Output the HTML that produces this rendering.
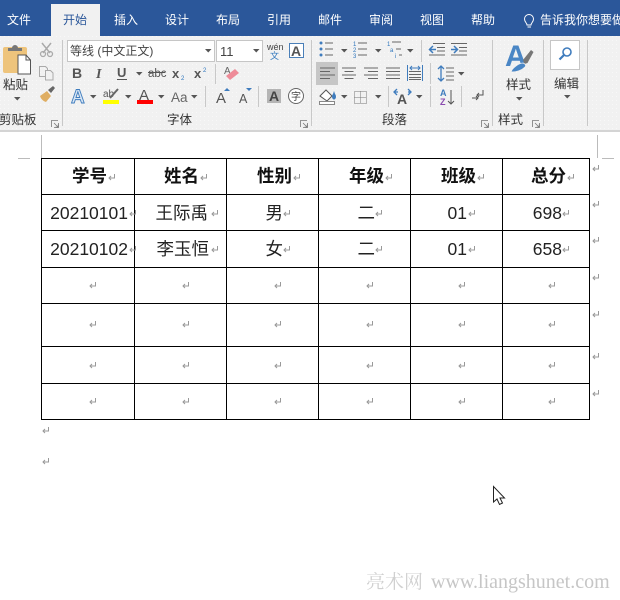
<!DOCTYPE html>
<html lang="zh"><head><meta charset="utf-8"><title>Word</title>
<style>
html,body{margin:0;padding:0;background:#fff}
svg{display:block}
text{font-family:"Liberation Sans","Noto Sans CJK SC",sans-serif}
.t{font-size:12px;fill:#fff}
.r{font-size:12.500px;fill:#333}
.h{font-size:17.500px;font-weight:700;fill:#111;text-anchor:end}
.c{font-size:17.500px;fill:#222;text-anchor:end}
.g{fill:none;stroke:#666;stroke-width:1}
</style></head><body>
<svg width="620" height="600" viewBox="0 0 620 600" xmlns="http://www.w3.org/2000/svg">
<defs>
<path id="dn" d="M0 0h6.500l-3.250 3.500z" fill="#555"/>
<path id="ret" d="M6.500 0v4H1M3 2L1 4l2 2" fill="none" stroke="#999" stroke-width="1"/>
<path id="lnch" d="M.5 7V.5H7M7.500 3v4.500H3M3 3l4 4M4.500 7.200h2.700V4.500" fill="none" stroke="#777" stroke-width=".8"/>
<pattern id="dots" width="4" height="4" patternUnits="userSpaceOnUse"><rect width="1" height="1" fill="#f8f8f8"/></pattern>
</defs>
<rect width="620" height="600" fill="#fff"/>
<rect width="620" height="36" fill="#2b579a"/>
<rect y="36" width="620" height="94" fill="#f1f1f1"/>
<rect y="36" width="620" height="94" fill="url(#dots)"/>
<rect y="130" width="620" height="2" fill="#d4d4d4"/>
<rect x="51" y="4" width="49" height="32" fill="#f1f1f1"/>
<text class="t" x="7" y="24">文件</text>
<text class="t" x="63" y="24" style="fill:#2b579a">开始</text>
<text class="t" x="114" y="24">插入</text>
<text class="t" x="165" y="24">设计</text>
<text class="t" x="216" y="24">布局</text>
<text class="t" x="267" y="24">引用</text>
<text class="t" x="318" y="24">邮件</text>
<text class="t" x="369" y="24">审阅</text>
<text class="t" x="420" y="24">视图</text>
<text class="t" x="471" y="24">帮助</text>
<path d="M527.500 27h3.500M527 25c0-2-2.500-3-2.500-6a4.500 4.500 0 0 1 9 0c0 3-2.500 4-2.500 6z" fill="none" stroke="#fff" stroke-width="1"/>
<text class="t" x="540" y="24">告诉我你想要做</text>

<g fill="#c8c8c8">
<rect x="62" y="40" width="1" height="86"/><rect x="311" y="40" width="1" height="86"/>
<rect x="492" y="40" width="1" height="86"/><rect x="543" y="40" width="1" height="86"/><rect x="587" y="40" width="1" height="86"/>
<rect x="215" y="64" width="1" height="20"/><rect x="205" y="86" width="1" height="21"/><rect x="258" y="86" width="1" height="21"/>
<rect x="421" y="40" width="1" height="22"/><rect x="430" y="63" width="1" height="21"/><rect x="388" y="86" width="1" height="21"/><rect x="430" y="86" width="1" height="21"/><rect x="461" y="86" width="1" height="21"/>
</g>

<!-- clipboard -->
<rect x="3" y="47" width="24" height="26" rx="2" fill="#eec47c"/>
<path d="M8 51v-3h4a3 3 0 0 1 6 0h4v3z" fill="#777"/>
<path d="M18 55h8l4.500 5v14H18z" fill="#fff" stroke="#555"/>
<path d="M26 55v5h4.500" fill="none" stroke="#555"/>
<text class="r" x="3" y="89">粘贴</text>
<use href="#dn" x="14" y="97"/>
<path d="M42 43l8 10M51 43l-8 10" stroke="#aaa" stroke-width="1.500" fill="none"/>
<circle cx="43" cy="54" r="2.500" fill="none" stroke="#aaa" stroke-width="1.300"/><circle cx="50" cy="54" r="2.500" fill="none" stroke="#aaa" stroke-width="1.300"/>
<path d="M39.500 66.500h6l2 2v8h-8z" fill="none" stroke="#aaa"/><path d="M45.500 70.500h5l2.500 2.500v7h-7.500z" fill="#f1f1f1" stroke="#aaa"/>
<path d="M40 96l7-5 4 5-5 6c-3-1-5-3-6-6z" fill="#dfae63"/><path d="M48 90l5-4 2 2-4 5z" fill="#666"/>
<text class="r" x="-1" y="124">剪贴板</text>
<use href="#lnch" x="51" y="120"/>

<!-- font -->
<rect x="67.500" y="40.500" width="147" height="21" fill="#fff" stroke="#c6c6c6"/>
<rect x="216.500" y="40.500" width="46" height="21" fill="#fff" stroke="#c6c6c6"/>
<text x="70" y="55" style="font-size:12px;fill:#444">等线 (中文正文)</text>
<text x="220" y="56" style="font-size:13px;fill:#444">11</text>
<use href="#dn" x="205" y="49"/><use href="#dn" x="253" y="49"/>
<text x="267" y="50" style="font-size:9px;fill:#444">wén</text>
<text x="270" y="59" style="font-size:9px;fill:#2f76bd">文</text>
<rect x="289.500" y="43.500" width="14" height="14" fill="#fff" stroke="#4a7fb8"/>
<text x="291" y="56" style="font-size:14px;font-weight:700;fill:#555">A</text>
<text x="72" y="78" style="font-size:14px;font-weight:700;fill:#555">B</text>
<text x="96" y="78" style="font-size:14px;font-weight:700;font-style:italic;fill:#555;font-family:'Liberation Serif',serif">I</text>
<text x="117" y="77" style="font-size:13px;font-weight:700;fill:#555">U</text><rect x="117" y="79" width="10" height="1" fill="#555"/>
<use href="#dn" x="136" y="72"/>
<text x="148" y="77" style="font-size:11.500px;fill:#555">abc</text><rect x="148" y="72" width="17" height="1" fill="#555"/>
<text x="172" y="78" style="font-size:13px;font-weight:700;fill:#555">x</text><text x="181" y="80" style="font-size:6px;fill:#2f76bd">2</text>
<text x="194" y="78" style="font-size:13px;font-weight:700;fill:#555">x</text><text x="203" y="72" style="font-size:6px;fill:#2f76bd">2</text>
<text x="224" y="74" style="font-size:10px;fill:#666">A</text>
<path d="M226 76l9-7 4 4-9 7z" fill="#ee8b98"/>
<text x="71" y="103" style="font-size:19px;font-weight:700;fill:#d8e6f5;stroke:#3f7cbd;stroke-width:.9">A</text>
<use href="#dn" x="90" y="95"/>
<text x="103" y="97" style="font-size:10px;fill:#555">ab</text>
<path d="M110 98l8-9" stroke="#666" stroke-width="2"/>
<rect x="103" y="100" width="16" height="4" fill="#ff0"/>
<use href="#dn" x="125" y="95"/>
<text x="139" y="100" style="font-size:15px;fill:#555">A</text>
<rect x="137" y="100" width="16" height="4" fill="#f00"/>
<use href="#dn" x="158" y="95"/>
<text x="171" y="102" style="font-size:13.500px;fill:#666">Aa</text>
<use href="#dn" x="191" y="95"/>
<text x="216" y="103" style="font-size:15px;fill:#555">A</text><path d="M224 91h6l-3-3z" fill="#3f7cbd"/>
<text x="239" y="103" style="font-size:12.500px;fill:#555">A</text><path d="M246 88h6l-3 3z" fill="#3f7cbd"/>
<rect x="267" y="89" width="14" height="14" fill="#b5b5b5"/>
<text x="269" y="101" style="font-size:14px;font-weight:700;fill:#444">A</text>
<circle cx="296" cy="96" r="7.500" fill="#fff" stroke="#666"/>
<text x="291" y="100" style="font-size:10px;fill:#444">字</text>
<text class="r" x="167" y="124">字体</text>
<use href="#lnch" x="300" y="120"/>

<!-- paragraph -->
<rect x="316" y="62" width="22" height="23" fill="#c6c6c6"/>
<g fill="#3f7cbd"><circle cx="321" cy="43" r="1.500"/><circle cx="321" cy="49" r="1.500"/><circle cx="321" cy="55" r="1.500"/></g>
<path class="g" d="M325 43h8M325 49h8M325 55h8M358 43h9M358 49h9M358 55h9M392 42h9M396 49h5M399 55h3M433 43.500h12M437 47.500h8M437 51h8M429 55h16M451 43.500h16M459 47.500h8M459 51h8M451 55h16"/>
<use href="#dn" x="341" y="49"/><use href="#dn" x="375" y="49"/><use href="#dn" x="407" y="49"/>
<text x="353" y="46" style="font-size:6px;fill:#2f76bd">1</text><text x="353" y="52" style="font-size:6px;fill:#2f76bd">2</text><text x="353" y="58" style="font-size:6px;fill:#2f76bd">3</text>
<text x="387" y="46" style="font-size:6px;fill:#2f76bd">1</text><text x="390" y="52" style="font-size:6px;fill:#2f76bd">a</text><text x="395" y="58" style="font-size:6px;fill:#2f76bd">i</text>
<path d="M436 49.500h-6M433 46l-3.500 3.500 3.500 3.500M451 49.500h6M454 46l3.500 3.500-3.500 3.500" fill="none" stroke="#3f7cbd" stroke-width="1.500"/>
<path class="g" d="M320 68h15M320 71.500h10M320 75h15M320 78.500h10M342 68h14M344.500 71.500h9M342 75h14M344.500 78.500h9M364 68h14M368 71.500h10M364 75h14M368 78.500h10M386 68h14M386 71.500h14M386 75h14M386 78.500h14M409 71.500h12M409 74.500h12M409 77.500h12"/>
<path d="M407.500 65v16M422.500 65v16M410 68h10M412 66l-2 2 2 2M418 66l2 2-2 2" fill="none" stroke="#3f7cbd"/>
<rect x="409" y="79" width="12" height="1" fill="#666"/>
<path d="M441 66v15M438 69l3-3 3 3M438 78l3 3 3-3" fill="none" stroke="#3f7cbd" stroke-width="1.300"/>
<path class="g" d="M446 68h8M446 72h8M446 76h8M446 80h8"/>
<use href="#dn" x="458" y="72"/>
<path d="M320 96l6-6 6 6-5 5z" fill="#fff" stroke="#555"/><path d="M333 94a2 3 0 1 0 2 0l-1-3z" fill="#3f7cbd"/>
<rect x="319.500" y="101.500" width="15" height="3" fill="#fff" stroke="#888"/>
<use href="#dn" x="341" y="95"/>
<path d="M354.500 91.500h12v12h-12zM360.500 91.500v12M354.500 97.500h12" fill="none" stroke="#777" stroke-dasharray="1 1"/>
<use href="#dn" x="375" y="95"/>
<text x="397" y="104" style="font-size:14px;font-weight:700;fill:#555">A</text>
<path d="M398 92h-3M397 89l-3 3 3 3M408 92h3M408 89l3 3-3 3" fill="none" stroke="#3f7cbd" stroke-width="1.300"/>
<use href="#dn" x="416" y="95"/>
<text x="440" y="96" style="font-size:9px;font-weight:700;fill:#3f7cbd">A</text>
<text x="440" y="105" style="font-size:9px;font-weight:700;fill:#8a4bb0">Z</text>
<path d="M451 90v14M448 101l3 3 3-3" fill="none" stroke="#555"/>
<path d="M483 90v5h-6M479 93l-2 2 2 2M472 98h6M476 96l2 2-2 2" fill="none" stroke="#555"/>
<text class="r" x="382" y="124">段落</text>
<use href="#lnch" x="481" y="120"/>

<!-- styles -->
<text x="505" y="66" style="font-size:30px;font-weight:700;fill:#4a86c5">A</text>
<path d="M523 60l8-10 2.500 2-6 11-3 1z" fill="#777"/>
<path d="M511 72c1-4 8-9 12-9 3 1 3 3 2 4-3 3-8 5-14 5z" fill="#4a86c5" stroke="#f1f1f1" stroke-width=".8"/>
<text class="r" x="506" y="89">样式</text>
<use href="#dn" x="516" y="97"/>
<text class="r" x="498" y="124">样式</text>
<use href="#lnch" x="532" y="120"/>

<!-- edit -->
<rect x="550.500" y="40.500" width="29" height="29" fill="#fff" stroke="#c6c6c6"/>
<circle cx="567" cy="52" r="4" fill="none" stroke="#3f7cbd" stroke-width="1.600"/>
<path d="M564 55l-4.500 4.500" stroke="#3f7cbd" stroke-width="2.200"/>
<text class="r" x="554" y="88">编辑</text>
<use href="#dn" x="564" y="95"/>

<!-- page corner marks -->
<path d="M41.500 135v23M18 158.500h12M597.500 135v23M602 158.500h12" stroke="#bbb" fill="none"/>

<!-- table -->
<path d="M41.500 158v261.500M134.500 158v261.500M226.500 158v261.500M318.500 158v261.500M410.500 158v261.500M502.500 158v261.500M589.500 158v261.500M41 158.500h549M41 194.500h549M41 230.500h549M41 267.500h549M41 303.500h549M41 346.500h549M41 383.500h549M41 419.500h549" stroke="#000" fill="none"/>

<text class="h" x="107" y="182">学号</text><text class="h" x="199" y="182">姓名</text><text class="h" x="292" y="182">性别</text><text class="h" x="384" y="182">年级</text><text class="h" x="476" y="182">班级</text><text class="h" x="566" y="182">总分</text>
<text class="c" x="128" y="219">20210101</text><text class="c" x="208" y="219">王际禹</text><text class="c" x="283" y="219">男</text><text class="c" x="375" y="219">二</text><text class="c" x="467" y="219">01</text><text class="c" x="562" y="219">698</text>
<text class="c" x="128" y="255">20210102</text><text class="c" x="209" y="255">李玉恒</text><text class="c" x="283" y="255">女</text><text class="c" x="375" y="255">二</text><text class="c" x="467" y="255">01</text><text class="c" x="562" y="255">658</text>

<g>
<use href="#ret" x="108" y="174"/><use href="#ret" x="200" y="174"/><use href="#ret" x="293" y="174"/><use href="#ret" x="385" y="174"/><use href="#ret" x="477" y="174"/><use href="#ret" x="567" y="174"/>
<use href="#ret" x="129" y="210"/><use href="#ret" x="211" y="210"/><use href="#ret" x="283" y="210"/><use href="#ret" x="375" y="210"/><use href="#ret" x="468" y="210"/><use href="#ret" x="562" y="210"/>
<use href="#ret" x="129" y="246"/><use href="#ret" x="211" y="246"/><use href="#ret" x="283" y="246"/><use href="#ret" x="375" y="246"/><use href="#ret" x="468" y="246"/><use href="#ret" x="562" y="246"/>
<use href="#ret" x="89" y="282"/><use href="#ret" x="182" y="282"/><use href="#ret" x="274" y="282"/><use href="#ret" x="366" y="282"/><use href="#ret" x="458" y="282"/><use href="#ret" x="548" y="282"/>
<use href="#ret" x="89" y="321"/><use href="#ret" x="182" y="321"/><use href="#ret" x="274" y="321"/><use href="#ret" x="366" y="321"/><use href="#ret" x="458" y="321"/><use href="#ret" x="548" y="321"/>
<use href="#ret" x="89" y="362"/><use href="#ret" x="182" y="362"/><use href="#ret" x="274" y="362"/><use href="#ret" x="366" y="362"/><use href="#ret" x="458" y="362"/><use href="#ret" x="548" y="362"/>
<use href="#ret" x="89" y="398"/><use href="#ret" x="182" y="398"/><use href="#ret" x="274" y="398"/><use href="#ret" x="366" y="398"/><use href="#ret" x="458" y="398"/><use href="#ret" x="548" y="398"/>
<use href="#ret" x="592" y="165"/><use href="#ret" x="592" y="201"/><use href="#ret" x="592" y="237"/><use href="#ret" x="592" y="274"/><use href="#ret" x="592" y="311"/><use href="#ret" x="592" y="353"/><use href="#ret" x="592" y="390"/>
<use href="#ret" x="42" y="427"/><use href="#ret" x="42" y="458"/>
</g>

<!-- cursor -->
<path d="M493.500 486.500V502l3.500-3 2.500 5.500 3-1.500-2.500-5h4.500z" fill="#fff" stroke="#222"/>

<!-- watermark -->
<text x="366" y="588" style="font-size:19px;fill:#d0d0d0;font-family:'Noto Serif CJK SC',serif">亮术网</text>
<text x="431" y="588" style="font-size:20px;fill:#c6c6c6;font-family:'Liberation Serif',serif">www.liangshunet.com</text>
</svg>
</body></html>
